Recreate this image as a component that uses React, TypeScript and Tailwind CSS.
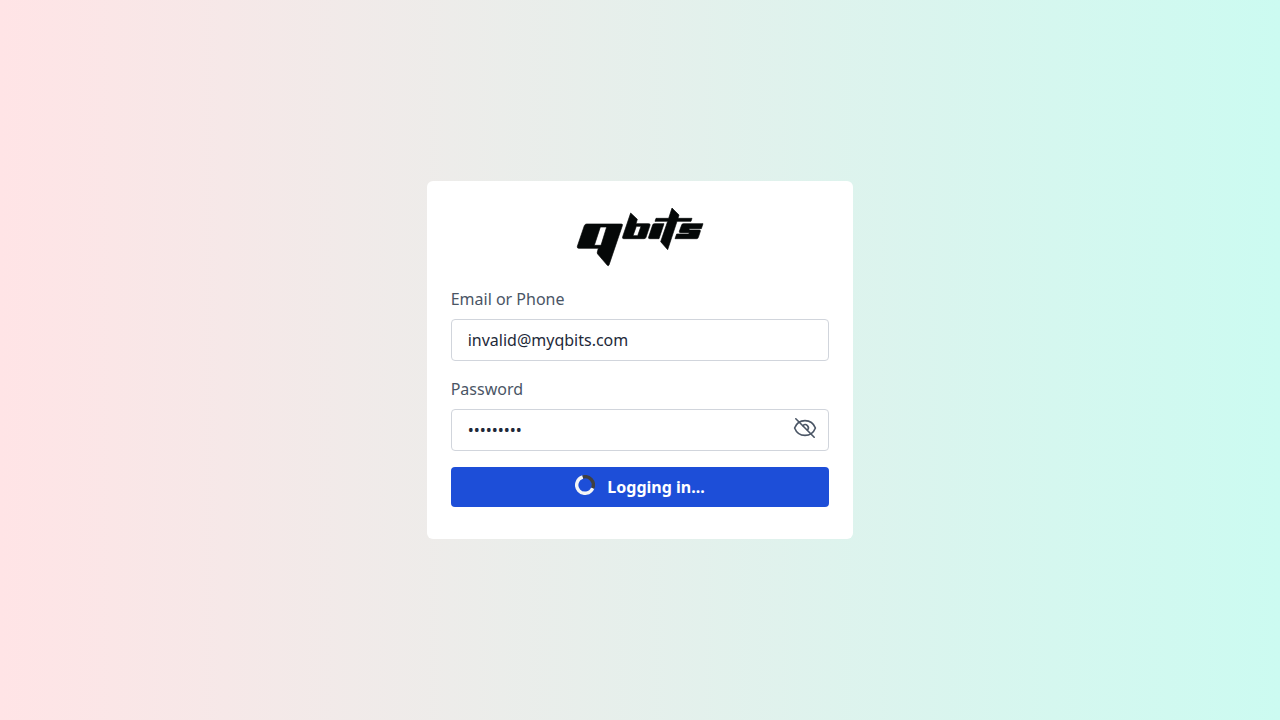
import { useState } from "react";
import type { FormEvent } from "react";

function Logo() {
  return (
    <svg
      role="img"
      aria-label="qbits"
      viewBox="0 15 396 198"
      className="mx-auto block h-[66px] w-[132px]"
      fill="#050808"
      stroke="#050808"
      strokeWidth="2"
      strokeLinejoin="round"
    >
      <path
        fillRule="evenodd"
        d="M38 72H142Q147 72 145 77L105 195Q103 199 100 196L71 162Q69 159 70 156L73 145H14Q9 145 10 139L31 77Q33 72 38 72ZM79 81L61 136H81L98 81Z"
      />
      <path
        fillRule="evenodd"
        d="M170 39L190 58L186 71H224Q230 71 228 76L216 112Q215 116 210 116H149Q144 116 146 110ZM187 79L177 107H191L201 79Z"
      />
      <path d="M241 71H270L255 116H227Q222 116 224 111L236 75Q237 71 241 71Z" />
      <path d="M246 55H284L294 24L315 45L312 55H354L351 64H309L281 149L260 125L281 64H243Z" />
      <path d="M328 71H387L382 86H346L345 90H376Q380 90 379 94L373 112Q372 116 368 116H303L308 102H344L346 98H319Q315 98 316 94L323 75Q324 71 328 71Z" />
    </svg>
  );
}

function EyeIcon({ crossed }: { crossed: boolean }) {
  return (
    <svg
      aria-hidden="true"
      viewBox="0 0 24 24"
      className="size-6"
      fill="none"
      stroke="currentColor"
      strokeWidth="1.6"
      strokeLinecap="round"
      strokeLinejoin="round"
    >
      <path d="M1.600 12C3.400 7.400 7.400 4.600 12 4.600S20.600 7.400 22.400 12C20.600 16.600 16.600 19.400 12 19.400S3.400 16.600 1.600 12Z" />
      {crossed ? (
        <>
          <path d="M10 9.600A3.100 3.100 0 0 1 14.400 14" />
          <path d="M2.800 2.800L21.200 21.200" />
        </>
      ) : (
        <circle cx="12" cy="12" r="3.1" />
      )}
    </svg>
  );
}

function Spinner() {
  return (
    <svg
      aria-hidden="true"
      viewBox="0 0 20 20"
      className="mr-3 mb-1 size-5 shrink-0"
      fill="none"
      strokeWidth="3.4"
    >
      <path d="M17.700 13.100A8.300 8.300 0 1 1 7.800 2" stroke="#f5f5f5" />
      <path d="M7.800 2A8.300 8.300 0 0 1 17.700 13.100" stroke="#404040" />
    </svg>
  );
}

const fieldClass =
  "mt-2 block w-full rounded-sm border border-gray-300 bg-white px-4 py-2 text-base text-gray-800 outline-none focus:border-blue-600";

export default function App() {
  const [email, setEmail] = useState("invalid@myqbits.com");
  const [password, setPassword] = useState("incorrect");
  const [visible, setVisible] = useState(false);

  const submit = (event: FormEvent) => event.preventDefault();

  return (
    <main className="flex min-h-screen items-center justify-center bg-linear-to-r/srgb from-[#ffe4e6] to-[#ccfbf1] font-['Noto_Sans',sans-serif]">
      <section className="w-1/3 min-w-80 rounded-md bg-white px-6 pt-6 pb-8">
        <Logo />
        <form onSubmit={submit} className="mt-4 flex flex-col gap-4">
          <div>
            <label htmlFor="email" className="block text-base text-gray-600">
              Email or Phone
            </label>
            <input
              id="email"
              type="text"
              value={email}
              onChange={(event) => setEmail(event.target.value)}
              className={fieldClass}
            />
          </div>
          <div>
            <label htmlFor="password" className="block text-base text-gray-600">
              Password
            </label>
            <div className="relative">
              <input
                id="password"
                type={visible ? "text" : "password"}
                value={password}
                onChange={(event) => setPassword(event.target.value)}
                className={fieldClass}
              />
              <button
                type="button"
                aria-label={visible ? "Hide password" : "Show password"}
                onClick={() => setVisible(!visible)}
                className="absolute inset-y-0 right-3 flex items-center pb-1 text-gray-600"
              >
                <EyeIcon crossed={!visible} />
              </button>
            </div>
          </div>
          <button
            type="submit"
            className="flex w-full items-center justify-center rounded-sm bg-[#1d4ed8] px-4 py-2 text-base font-bold text-white"
          >
            <Spinner />
            Logging in...
          </button>
        </form>
      </section>
    </main>
  );
}
